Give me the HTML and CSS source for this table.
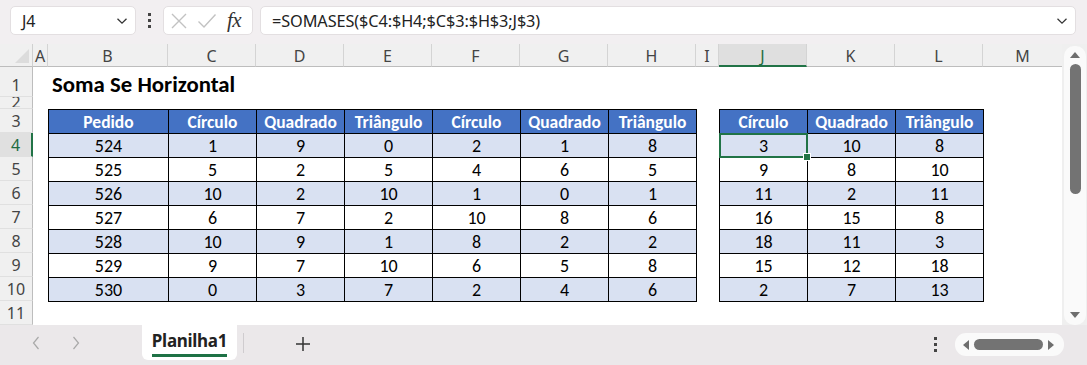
FILE: index.html
```html
<!DOCTYPE html>
<html lang="pt">
<head>
<meta charset="utf-8">
<link rel="stylesheet" href="styles.css">
</head>
<body>
<div class="app">
  <div class="fbar">
    <div class="namebox">
      <span class="nb-text">J4</span>
      <svg class="chev" width="12" height="8" viewBox="0 0 12 8"><path d="M1.5 1.8 L6 6.2 L10.5 1.8" fill="none" stroke="#333" stroke-width="1.3"/></svg>
    </div>
    <div class="vdots"><span></span><span></span><span></span></div>
    <div class="fxbox">
      <svg width="18" height="18" viewBox="0 0 18 18"><path d="M2 2 L16 16 M16 2 L2 16" stroke="#c2c2c2" stroke-width="1.4" fill="none"/></svg>
      <svg width="20" height="18" viewBox="0 0 20 18"><path d="M1.5 9.5 L7 15 L18.5 2.5" stroke="#c2c2c2" stroke-width="1.4" fill="none"/></svg>
      <span class="fx">fx</span>
    </div>
    <div class="formula">
      <span class="f-text">=SOMASES($C4:$H4;$C$3:$H$3;J$3)</span>
      <svg class="chev" width="12" height="8" viewBox="0 0 12 8"><path d="M1.5 1.8 L6 6.2 L10.5 1.8" fill="none" stroke="#333" stroke-width="1.2"/></svg>
    </div>
  </div>

  <div class="main">
    <div class="sheet">
      <div class="corner"><svg width="14" height="14" viewBox="0 0 14 14"><path d="M14 0 L14 14 L0 14 Z" fill="#dcdcdc"/></svg></div>
      <div class="ch">A</div>
      <div class="ch">B</div>
      <div class="ch">C</div>
      <div class="ch">D</div>
      <div class="ch">E</div>
      <div class="ch">F</div>
      <div class="ch">G</div>
      <div class="ch">H</div>
      <div class="ch">I</div>
      <div class="ch selcol">J</div>
      <div class="ch">K</div>
      <div class="ch">L</div>
      <div class="ch last">M</div>

      <div class="rh r1">1</div>
      <div class="rh r2"><span>2</span></div>
      <div class="rh">3</div>
      <div class="rh selrow">4</div>
      <div class="rh">5</div>
      <div class="rh">6</div>
      <div class="rh">7</div>
      <div class="rh">8</div>
      <div class="rh">9</div>
      <div class="rh">10</div>
      <div class="rh">11</div>

      <div class="title">Soma Se Horizontal</div>

      <table class="tbl tbl-left">
        <colgroup><col class="w120"><col class="w88"><col class="w88"><col class="w88"><col class="w88"><col class="w88"><col class="w88"></colgroup>
        <tr class="hd"><td>Pedido</td><td>Círculo</td><td>Quadrado</td><td>Triângulo</td><td>Círculo</td><td>Quadrado</td><td>Triângulo</td></tr>
        <tr class="alt"><td>524</td><td>1</td><td>9</td><td>0</td><td>2</td><td>1</td><td>8</td></tr>
        <tr><td>525</td><td>5</td><td>2</td><td>5</td><td>4</td><td>6</td><td>5</td></tr>
        <tr class="alt"><td>526</td><td>10</td><td>2</td><td>10</td><td>1</td><td>0</td><td>1</td></tr>
        <tr><td>527</td><td>6</td><td>7</td><td>2</td><td>10</td><td>8</td><td>6</td></tr>
        <tr class="alt"><td>528</td><td>10</td><td>9</td><td>1</td><td>8</td><td>2</td><td>2</td></tr>
        <tr><td>529</td><td>9</td><td>7</td><td>10</td><td>6</td><td>5</td><td>8</td></tr>
        <tr class="alt"><td>530</td><td>0</td><td>3</td><td>7</td><td>2</td><td>4</td><td>6</td></tr>
      </table>

      <table class="tbl tbl-right">
        <colgroup><col class="w88"><col class="w88"><col class="w88"></colgroup>
        <tr class="hd"><td>Círculo</td><td>Quadrado</td><td>Triângulo</td></tr>
        <tr class="alt"><td class="sel">3</td><td>10</td><td>8</td></tr>
        <tr><td>9</td><td>8</td><td>10</td></tr>
        <tr class="alt"><td>11</td><td>2</td><td>11</td></tr>
        <tr><td>16</td><td>15</td><td>8</td></tr>
        <tr class="alt"><td>18</td><td>11</td><td>3</td></tr>
        <tr><td>15</td><td>12</td><td>18</td></tr>
        <tr class="alt"><td>2</td><td>7</td><td>13</td></tr>
      </table>
    </div>

    <div class="vscroll">
      <svg width="12" height="8" viewBox="0 0 12 8"><path d="M6 1 L11 7 L1 7 Z" fill="#6e6e6e"/></svg>
      <div class="vthumb"></div>
      <div class="vspace"></div>
      <svg width="12" height="8" viewBox="0 0 12 8"><path d="M1 1 L11 1 L6 7 Z" fill="#6e6e6e"/></svg>
    </div>
  </div>

  <div class="tabbar">
    <div class="navs">
      <svg width="10" height="16" viewBox="0 0 10 16"><path d="M7.5 2 L2.5 8 L7.5 14" fill="none" stroke="#a8a8a8" stroke-width="1.2"/></svg>
      <svg width="10" height="16" viewBox="0 0 10 16"><path d="M2.5 2 L7.5 8 L2.5 14" fill="none" stroke="#a8a8a8" stroke-width="1.2"/></svg>
    </div>
    <div class="tab"><span class="tab-text">Planilha1</span></div>
    <div class="tsep"></div>
    <div class="plus"><svg width="16" height="16" viewBox="0 0 16 16"><path d="M8 1 V15 M1 8 H15" stroke="#333" stroke-width="1.5"/></svg></div>
    <div class="grow"></div>
    <div class="hdots"><span></span><span></span><span></span></div>
    <div class="hscroll">
      <svg width="8" height="12" viewBox="0 0 8 12"><path d="M7 1 L7 11 L1 6 Z" fill="#6e6e6e"/></svg>
      <div class="hthumb"></div>
      <svg width="8" height="12" viewBox="0 0 8 12"><path d="M1 1 L1 11 L7 6 Z" fill="#6e6e6e"/></svg>
    </div>
  </div>
</div>
</body>
</html>
```

FILE: styles.css
```css
* { box-sizing: border-box; }
html, body { margin: 0; padding: 0; }
body {
  width: 1087px;
  height: 365px;
  overflow: hidden;
  font-family: "Noto Sans", "Open Sans", sans-serif;
  background: #f1eef0;
}
.app {
  display: flex;
  flex-direction: column;
  width: 1087px;
  height: 365px;
}

/* formula bar */
.fbar {
  height: 44px;
  display: flex;
  align-items: flex-start;
  padding: 6px 11px 0 10px;
  background: #f2eff1;
}
.namebox {
  width: 126px;
  height: 29px;
  background: #fff;
  border: 1px solid #e3dfe1;
  border-radius: 5px;
  display: flex;
  align-items: center;
  justify-content: space-between;
  padding: 0 7px 0 11px;
}
.nb-text { font-size: 16px; color: #222; }
.vdots {
  width: 27px;
  height: 29px;
  display: flex;
  flex-direction: column;
  align-items: center;
  justify-content: center;
  gap: 3px;
}
.vdots span, .hdots span {
  width: 3px;
  height: 3px;
  background: #444;
  display: block;
}
.fxbox {
  width: 90px;
  height: 29px;
  background: #fff;
  border: 1px solid #e3dfe1;
  border-radius: 5px;
  display: flex;
  align-items: center;
  padding: 0 0 0 6px;
  gap: 9px;
}
.fx {
  font-family: "Liberation Serif", "DejaVu Serif", serif;
  font-style: italic;
  font-size: 21px;
  color: #333;
  margin-left: 1px;
  letter-spacing: -0.5px;
}
.formula {
  flex: 1;
  margin-left: 7px;
  height: 29px;
  background: #fff;
  border: 1px solid #e3dfe1;
  border-radius: 5px;
  display: flex;
  align-items: center;
  justify-content: space-between;
  padding: 0 7px 0 11px;
}
.f-text { font-size: 16.3px; color: #222; letter-spacing: -0.1px; }

/* main */
.main {
  display: flex;
  height: 281px;
  background: #efefef;
}
.sheet {
  width: 1062px;
  display: grid;
  grid-template-columns: 33px 15px 120px repeat(6, 88px) 23px repeat(3, 88px) 79px;
  grid-template-rows: 23px 30px 12px repeat(9, 24px);
  background: #fff;
}
.corner {
  grid-column: 1;
  grid-row: 1;
  background: #f0f0f0;
  border-right: 1px solid #d0d0d0;
  border-bottom: 1px solid #bdbdbd;
  display: flex;
  align-items: flex-end;
  justify-content: flex-end;
  padding: 0 3px 3px 0;
}
.ch {
  grid-row: 1;
  background: #f0f0f0;
  border-right: 1px solid #d4d4d4;
  border-bottom: 1px solid #bdbdbd;
  font-size: 16px;
  color: #444;
  display: flex;
  align-items: center;
  justify-content: center;
  padding-top: 1px;
}
.ch.last { border-right: none; }
.ch.selcol {
  background: #dfdfdf;
  color: #1e6b41;
  border-bottom: 2px solid #217346;
  padding-top: 2px;
}
.rh {
  grid-column: 1;
  background: #f0f0f0;
  border-right: 1px solid #bdbdbd;
  border-bottom: 1px solid #e0e0e0;
  font-size: 16px;
  color: #444;
  display: flex;
  align-items: center;
  justify-content: center;
  overflow: hidden;
  padding-top: 1px;
}
.rh.r1 { padding-top: 6px; }
.rh.r2 { padding-top: 0; align-items: flex-start; }
.rh.r2 span { line-height: 10px; font-size: 16px; height: 10px; overflow: hidden; display: block; }
.rh.selrow {
  background: #e0e0e0;
  color: #1e6b41;
  border-right: 2px solid #217346;
}
.title {
  grid-column: 3 / 8;
  grid-row: 2;
  font-family: "Carlito", "Lato", sans-serif;
  font-weight: 700;
  font-size: 22.8px;
  color: #000;
  padding: 3px 0 0 4px;
}

/* tables */
.tbl {
  border-collapse: collapse;
  table-layout: fixed;
  font-family: "Carlito", "Lato", sans-serif;
  font-size: 18px;
  color: #000;
  grid-row: 4 / 12;
  align-self: start;
}
.tbl-left { grid-column: 3 / 10; width: 649px; }
.tbl-right { grid-column: 11 / 14; width: 265px; }
.w120 { width: 120px; }
.w88 { width: 88px; }
.tbl td {
  border: 1px solid #000;
  height: 24px;
  padding: 0;
  text-align: center;
  vertical-align: middle;
  line-height: 22px;
  white-space: nowrap;
}
.tbl tr.hd td {
  background: #4472c4;
  color: #fff;
  font-weight: 700;
  font-size: 17.5px;
}
.tbl tr.alt td { background: #d9e1f2; }
.tbl td.sel { position: relative; }
.tbl td.sel::after {
  content: "";
  position: absolute;
  left: -1px;
  top: -1px;
  right: -1px;
  bottom: -1px;
  border: 2px solid #217346;
}
.tbl td.sel::before {
  content: "";
  position: absolute;
  right: -4px;
  bottom: -4px;
  width: 6px;
  height: 6px;
  background: #217346;
  border: 1px solid #fff;
  z-index: 2;
}

/* vertical scrollbar */
.vscroll {
  width: 22px;
  margin: 2px 0 0 2px;
  height: 279px;
  background: #fafafa;
  border-radius: 10px;
  display: flex;
  flex-direction: column;
  align-items: center;
  padding: 5px 0 6px;
}
.vthumb {
  width: 11px;
  height: 130px;
  margin-top: 5px;
  background: #737373;
  border-radius: 6px;
}
.vspace { flex: 1; }

/* tab bar */
.tabbar {
  flex: 1;
  display: flex;
  align-items: flex-start;
  background: #ebe8ea;
}
.navs {
  display: flex;
  gap: 30px;
  padding: 10px 0 0 31px;
  width: 142px;
}
.tab {
  width: 95px;
  height: 35px;
  background: #fff;
  border-radius: 0 0 6px 6px;
  display: flex;
  justify-content: center;
  padding-top: 4px;
}
.tab-text {
  font-weight: 700;
  font-size: 17px;
  color: #222;
  height: 28px;
  padding: 0;
  border-bottom: 3px solid #1e7145;
  line-height: 23px;
  letter-spacing: -0.3px;
}
.tsep {
  width: 1px;
  height: 20px;
  background: #cfcccf;
  margin: 8px 0 0 6px;
}
.plus {
  padding: 10px 0 0 51px;
}
.grow { flex: 1; }
.hdots {
  display: flex;
  flex-direction: column;
  gap: 3px;
  padding-top: 12px;
  margin-right: 18px;
}
.hscroll {
  width: 109px;
  height: 23px;
  margin: 8px 23px 0 0;
  background: #fafafa;
  border-radius: 11px;
  display: flex;
  align-items: center;
  padding: 0 9px 0 7px;
  gap: 4px;
}
.hthumb {
  width: 61px;
  height: 11px;
  background: #737373;
  border-radius: 6px;
  flex: 1;
}
```
